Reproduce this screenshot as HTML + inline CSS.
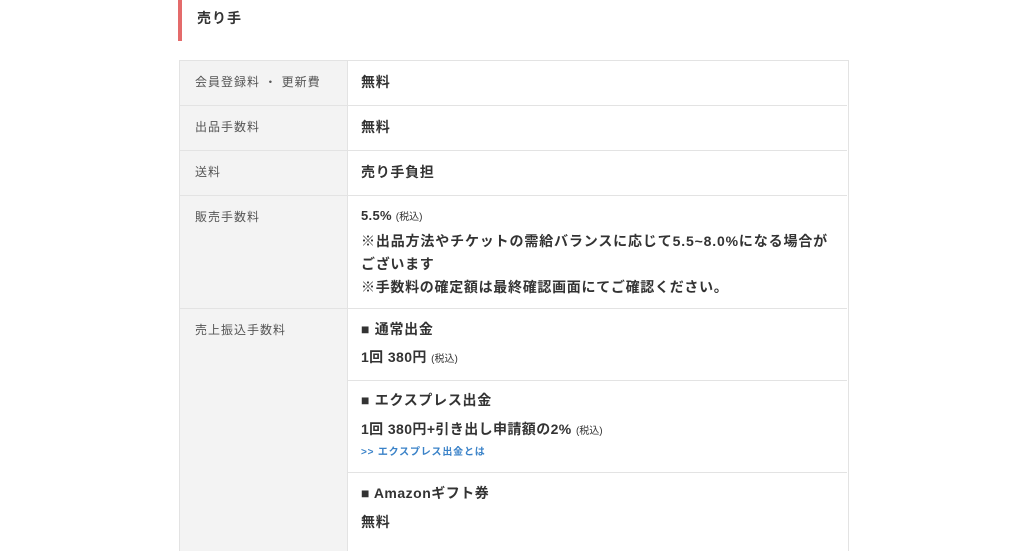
<!DOCTYPE html>
<html><head><meta charset="utf-8"><style>
body{margin:0;width:1024px;height:538px;background:#fff;overflow:hidden;position:relative;font-family:"Liberation Sans","Noto Sans CJK JP",sans-serif;}
.a{position:absolute;white-space:nowrap;line-height:1}
.l{font-size:12px;color:#555;left:195px;letter-spacing:1px}
.v{font-size:14px;font-weight:bold;color:#333;left:361px;letter-spacing:0.7px}
.s{font-size:10px;font-weight:normal;letter-spacing:0}
.h{position:absolute;height:1px;background:#e3e3e3}
</style></head><body>
<div style="position:absolute;left:178px;top:0;width:4px;height:41px;background:#e46b6b"></div>
<div class="a" style="left:197px;top:11px;font-size:14px;font-weight:bold;color:#333;letter-spacing:1px">売り手</div>
<div style="position:absolute;left:179px;top:60px;width:668px;height:490px;border:1px solid #e3e3e3;border-bottom:none"></div>
<div style="position:absolute;left:180px;top:61px;width:167px;height:490px;background:#f3f3f3;border-right:1px solid #e3e3e3"></div>
<div class="h" style="left:180px;top:105px;width:667px"></div>
<div class="h" style="left:180px;top:150px;width:667px"></div>
<div class="h" style="left:180px;top:195px;width:667px"></div>
<div class="h" style="left:180px;top:308px;width:667px"></div>
<div class="h" style="left:348px;top:380px;width:499px"></div>
<div class="h" style="left:348px;top:472px;width:499px"></div>

<div class="a l" style="top:76px">会員登録料 ・ 更新費</div>
<div class="a v" style="top:75px">無料</div>
<div class="a l" style="top:121px">出品手数料</div>
<div class="a v" style="top:120px">無料</div>
<div class="a l" style="top:166px">送料</div>
<div class="a v" style="top:165px">売り手負担</div>
<div class="a l" style="top:211px">販売手数料</div>
<div class="a v" style="top:209px;font-size:13px;letter-spacing:0.3px">5.5% <span class="s">(税込)</span></div>
<div class="a v" style="top:234px;letter-spacing:0.85px">※出品方法やチケットの需給バランスに応じて5.5~8.0%になる場合が</div>
<div class="a v" style="top:257px">ございます</div>
<div class="a v" style="top:280px">※手数料の確定額は最終確認画面にてご確認ください。</div>
<div class="a l" style="top:324px">売上振込手数料</div>
<div class="a v" style="top:322px">■ 通常出金</div>
<div class="a v" style="top:350px;letter-spacing:0.4px">1回 380円 <span class="s">(税込)</span></div>
<div class="a v" style="top:393px">■ エクスプレス出金</div>
<div class="a v" style="top:422px;letter-spacing:0.4px">1回 380円+引き出し申請額の2% <span class="s">(税込)</span></div>
<div class="a" style="left:361px;top:448px;font-size:10px;font-weight:bold;color:#3a82c8;letter-spacing:0.8px">&gt;&gt; エクスプレス出金とは</div>
<div class="a v" style="top:486px;letter-spacing:0.5px">■ Amazonギフト券</div>
<div class="a v" style="top:515px">無料</div>
</body></html>
